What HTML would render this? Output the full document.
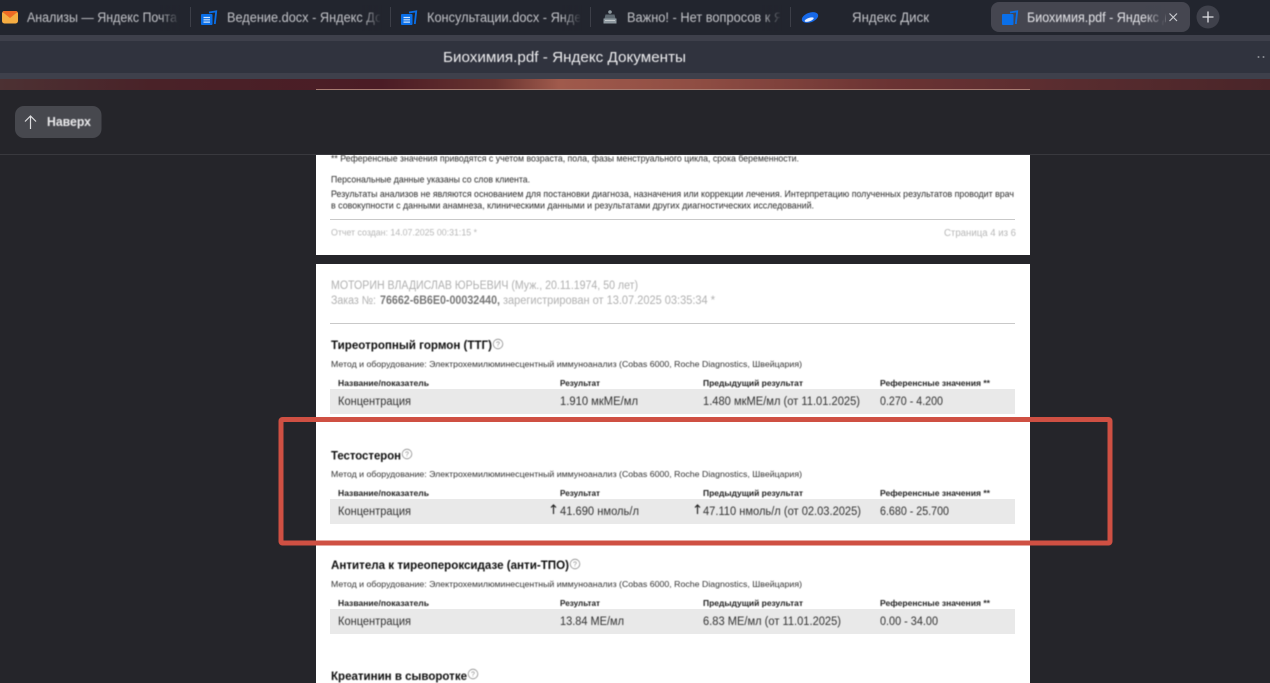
<!DOCTYPE html>
<html lang="ru"><head><meta charset="utf-8"><title>Биохимия.pdf - Яндекс Документы</title>
<style>
html,body{margin:0;padding:0;background:#25252a;overflow:hidden}
svg{display:block;font-family:"Liberation Sans",sans-serif}
.b{font-weight:bold}
</style></head><body>
<svg width="1270" height="683" viewBox="0 0 1270 683" xmlns="http://www.w3.org/2000/svg">
<defs>
<linearGradient id="strip" x1="0" x2="1" y1="0" y2="0">
<stop offset="0" stop-color="#4c3133"/><stop offset=".12" stop-color="#4a2228"/><stop offset=".3" stop-color="#4b1c25"/><stop offset=".39" stop-color="#683330"/><stop offset=".44" stop-color="#a05a4c"/><stop offset=".55" stop-color="#8f4d43"/><stop offset=".7" stop-color="#6b3333"/><stop offset=".85" stop-color="#582c2f"/><stop offset="1" stop-color="#4a2529"/>
</linearGradient>
<linearGradient id="f1" x1="0" x2="1" y1="0" y2="0"><stop offset="0" stop-color="#22252e" stop-opacity="0"/><stop offset="1" stop-color="#22252e"/></linearGradient>
<linearGradient id="f2" x1="0" x2="1" y1="0" y2="0"><stop offset="0" stop-color="#454650" stop-opacity="0"/><stop offset="1" stop-color="#454650"/></linearGradient>
<clipPath id="c1"><rect x="20" y="0" width="160" height="35"/></clipPath>
<clipPath id="c2"><rect x="220" y="0" width="160" height="35"/></clipPath>
<clipPath id="c3"><rect x="420" y="0" width="160" height="35"/></clipPath>
<clipPath id="c4"><rect x="620" y="0" width="160" height="35"/></clipPath>
<clipPath id="c5"><rect x="1020" y="0" width="145" height="35"/></clipPath>
<filter id="soft" x="-2%" y="-2%" width="104%" height="104%"><feGaussianBlur stdDeviation="0.4"/></filter>
<g id="doc">
<path d="M8 2 L15.200 .8 L13.800 13.500" fill="none" stroke="#0a6fe8" stroke-width="1.800"/>
<rect x="0" y="3.500" width="11.500" height="11" rx="1" fill="#0a6fe8"/>
</g>
<g id="docl">
<use href="#doc"/>
<path d="M2.500 7h6.500M2.500 9.300h6.500M2.500 11.600h6.500" stroke="#cfe3fb" stroke-width="1.200"/>
</g>
<g id="help"><circle cx="0" cy="0" r="4.800" fill="none" stroke="#8c8c8c" stroke-width=".8"/><text x="0" y="2.500" font-size="7" fill="#8c8c8c" text-anchor="middle">?</text></g>
</defs>

<rect width="1270" height="683" fill="#25252a"/>
<rect width="1270" height="35" fill="#22252e"/>
<rect y="35" width="1270" height="6" fill="#3e404b"/>
<rect y="41" width="1270" height="32" fill="#30333e"/>
<rect y="73" width="1270" height="6" fill="#3e404b"/>
<rect y="79" width="1270" height="11" fill="url(#strip)"/>
<rect x="316" y="89" width="714" height="1" fill="#a87c72"/>
<rect y="154" width="1270" height="1" fill="#39393e"/>

<!-- tabs -->
<rect x="991" y="2" width="199" height="30" rx="8" fill="#454650"/>
<circle cx="1208" cy="17" r="11.500" fill="#3f414b"/>
<path d="M1202.500 17h11M1208 11.500v11" stroke="#e2e2e6" stroke-width="1.300"/>
<path d="M1169.500 13.500l7.500 7.500M1177 13.500l-7.500 7.500" stroke="#c8c9ce" stroke-width="1.200"/>
<g fill="#3d3f48"><rect x="190" y="7" width="1" height="20"/><rect x="390" y="7" width="1" height="20"/><rect x="590" y="7" width="1" height="20"/><rect x="790" y="7" width="1" height="20"/></g>

<!-- tab icons -->
<rect x="2" y="11" width="16" height="12.500" rx="2.500" fill="#f6ad42"/>
<path d="M2.500 12 L10 18 L17.500 12 Q17 11 15.500 11 H4.500 Q3 11 2.500 12Z" fill="#ef6a24"/>
<use href="#docl" x="201" y="10.500"/>
<use href="#docl" x="401" y="10.500"/>
<use href="#doc" x="1002" y="10.500"/>
<g fill="#8e99a0"><path d="M603.500 18.500h13v5h-13z"/><path d="M605.500 14.500h9l1 4h-11z" fill="#5f6a72"/><circle cx="610" cy="12" r="1.800"/><path d="M605 20.500h10" stroke="#d4d8da" stroke-width=".8"/></g>
<g transform="rotate(-20 810 17.500)"><ellipse cx="810" cy="17.500" rx="8.500" ry="4.800" fill="#1769e8"/><ellipse cx="808.500" cy="19.200" rx="4.800" ry="1.700" fill="#e8f0ff"/></g>

<g font-size="13.500" fill="#c3c4c9" filter="url(#soft)">
<g clip-path="url(#c1)"><text x="27" y="22" textLength="150" lengthAdjust="spacingAndGlyphs">Анализы — Яндекс Почта</text></g>
<g clip-path="url(#c2)"><text x="227" y="22" textLength="205" lengthAdjust="spacingAndGlyphs">Ведение.docx - Яндекс Документы</text></g>
<g clip-path="url(#c3)"><text x="427" y="22" textLength="236" lengthAdjust="spacingAndGlyphs">Консультации.docx - Яндекс Документы</text></g>
<g clip-path="url(#c4)"><text x="627" y="22" textLength="190" lengthAdjust="spacingAndGlyphs">Важно! - Нет вопросов к Яндекс</text></g>
<text x="852" y="22" textLength="77" lengthAdjust="spacingAndGlyphs">Яндекс Диск</text>
<g clip-path="url(#c5)"><text x="1027" y="22" fill="#e6e6ea" textLength="200" lengthAdjust="spacingAndGlyphs">Биохимия.pdf - Яндекс Документы</text></g>
<text x="443" y="62" font-size="15" fill="#eeeef0" textLength="243" lengthAdjust="spacingAndGlyphs">Биохимия.pdf - Яндекс Документы</text>
</g>
<rect x="160" y="5" width="20" height="26" fill="url(#f1)"/>
<rect x="362" y="5" width="20" height="26" fill="url(#f1)"/>
<rect x="562" y="5" width="20" height="26" fill="url(#f1)"/>
<rect x="762" y="5" width="20" height="26" fill="url(#f1)"/>
<rect x="1145" y="5" width="20" height="26" fill="url(#f2)"/>
<circle cx="1258.500" cy="57" r="1" fill="#8b8d94"/><circle cx="1263.500" cy="57" r="1" fill="#8b8d94"/>

<!-- Button -->
<rect x="15" y="106" width="86.500" height="32" rx="9" fill="#47484e"/>
<path d="M30.500 129V116M25 121.500l5.500-5.500 5.500 5.500" fill="none" stroke="#dcdcde" stroke-width="1.200"/>
<text x="47" y="126" font-size="13" font-weight="bold" fill="#e9e9eb" textLength="44" lengthAdjust="spacingAndGlyphs" filter="url(#soft)">Наверх</text>

<!-- pages -->
<rect x="316" y="155" width="714" height="100" fill="#fff"/>
<rect x="316" y="264" width="714" height="419" fill="#fff"/>
<rect x="330" y="219" width="685" height="1" fill="#c9c9c9"/>
<rect x="330" y="323" width="685" height="1" fill="#c9c9c9"/>
<rect x="330" y="389" width="685" height="25" fill="#e9e9e9"/>
<rect x="330" y="499" width="685" height="25" fill="#e9e9e9"/>
<rect x="330" y="609" width="685" height="25" fill="#e9e9e9"/>

<g filter="url(#soft)">
<g font-size="8.800" fill="#2c2c2c">
<text x="331" y="161.500" textLength="468" lengthAdjust="spacingAndGlyphs">** Референсные значения приводятся с учетом возраста, пола, фазы менструального цикла, срока беременности.</text>
<text x="331" y="182.500" textLength="199" lengthAdjust="spacingAndGlyphs">Персональные данные указаны со слов клиента.</text>
<text x="331" y="197" textLength="683" lengthAdjust="spacingAndGlyphs">Результаты анализов не являются основанием для постановки диагноза, назначения или коррекции лечения. Интерпретацию полученных результатов проводит врач</text>
<text x="331" y="208.500" textLength="483" lengthAdjust="spacingAndGlyphs">в совокупности с данными анамнеза, клиническими данными и результатами других диагностических исследований.</text>
</g>
<g font-size="9" fill="#b7b7b7">
<text x="331" y="235.500" textLength="146" lengthAdjust="spacingAndGlyphs">Отчет создан: 14.07.2025 00:31:15 *</text>
<text x="944" y="236" font-size="9.800" textLength="72" lengthAdjust="spacingAndGlyphs">Страница 4 из 6</text>
</g>
<g font-size="11.500" fill="#b0b0b0">
<text x="331" y="289" textLength="307" lengthAdjust="spacingAndGlyphs">МОТОРИН ВЛАДИСЛАВ ЮРЬЕВИЧ (Муж., 20.11.1974, 50 лет)</text>
<text x="331" y="304" textLength="45" lengthAdjust="spacingAndGlyphs">Заказ №:</text>
<text x="380" y="304" class="b" fill="#777" textLength="120" lengthAdjust="spacingAndGlyphs">76662-6B6E0-00032440,</text>
<text x="503" y="304" textLength="212" lengthAdjust="spacingAndGlyphs">зарегистрирован от 13.07.2025 03:35:34 *</text>
</g>

<!-- Titles -->
<g font-size="12" class="b" fill="#111">
<text x="331" y="349" textLength="161" lengthAdjust="spacingAndGlyphs">Тиреотропный гормон (ТТГ)</text>
<text x="331" y="459.500" textLength="70" lengthAdjust="spacingAndGlyphs">Тестостерон</text>
<text x="331" y="569" textLength="238" lengthAdjust="spacingAndGlyphs">Антитела к тиреопероксидазе (анти-ТПО)</text>
<text x="331" y="680" textLength="136" lengthAdjust="spacingAndGlyphs">Креатинин в сыворотке</text>
</g>
<use href="#help" x="498" y="344"/><use href="#help" x="407" y="454"/><use href="#help" x="575" y="564"/><use href="#help" x="473" y="674"/>

<!-- Method -->
<g font-size="8.600" fill="#333">
<text x="331" y="367" textLength="471" lengthAdjust="spacingAndGlyphs">Метод и оборудование: Электрохемилюминесцентный иммуноанализ (Cobas 6000, Roche Diagnostics, Швейцария)</text>
<text x="331" y="477" textLength="471" lengthAdjust="spacingAndGlyphs">Метод и оборудование: Электрохемилюминесцентный иммуноанализ (Cobas 6000, Roche Diagnostics, Швейцария)</text>
<text x="331" y="587" textLength="471" lengthAdjust="spacingAndGlyphs">Метод и оборудование: Электрохемилюминесцентный иммуноанализ (Cobas 6000, Roche Diagnostics, Швейцария)</text>
</g>

<!-- Headers -->
<g font-size="8.600" class="b" fill="#222">
<text x="338" y="386" textLength="91" lengthAdjust="spacingAndGlyphs">Название/показатель</text><text x="560" y="386" textLength="40" lengthAdjust="spacingAndGlyphs">Результат</text><text x="703" y="386" textLength="100" lengthAdjust="spacingAndGlyphs">Предыдущий результат</text><text x="880" y="386" textLength="110" lengthAdjust="spacingAndGlyphs">Референсные значения **</text>
<text x="338" y="496" textLength="91" lengthAdjust="spacingAndGlyphs">Название/показатель</text><text x="560" y="496" textLength="40" lengthAdjust="spacingAndGlyphs">Результат</text><text x="703" y="496" textLength="100" lengthAdjust="spacingAndGlyphs">Предыдущий результат</text><text x="880" y="496" textLength="110" lengthAdjust="spacingAndGlyphs">Референсные значения **</text>
<text x="338" y="606" textLength="91" lengthAdjust="spacingAndGlyphs">Название/показатель</text><text x="560" y="606" textLength="40" lengthAdjust="spacingAndGlyphs">Результат</text><text x="703" y="606" textLength="100" lengthAdjust="spacingAndGlyphs">Предыдущий результат</text><text x="880" y="606" textLength="110" lengthAdjust="spacingAndGlyphs">Референсные значения **</text>
</g>

<!-- Rows -->
<g font-size="11.500" fill="#333">
<text x="338" y="405" textLength="73" lengthAdjust="spacingAndGlyphs">Концентрация</text><text x="560" y="405" textLength="78" lengthAdjust="spacingAndGlyphs">1.910 мкМЕ/мл</text><text x="703" y="405" textLength="157" lengthAdjust="spacingAndGlyphs">1.480 мкМЕ/мл (от 11.01.2025)</text><text x="880" y="405" textLength="63" lengthAdjust="spacingAndGlyphs">0.270 - 4.200</text>
<text x="338" y="515" textLength="73" lengthAdjust="spacingAndGlyphs">Концентрация</text><text x="560" y="515" textLength="79" lengthAdjust="spacingAndGlyphs">41.690 нмоль/л</text><text x="703" y="515" textLength="158" lengthAdjust="spacingAndGlyphs">47.110 нмоль/л (от 02.03.2025)</text><text x="880" y="515" textLength="69" lengthAdjust="spacingAndGlyphs">6.680 - 25.700</text>
<text x="338" y="625" textLength="73" lengthAdjust="spacingAndGlyphs">Концентрация</text><text x="560" y="625" textLength="64" lengthAdjust="spacingAndGlyphs">13.84 МЕ/мл</text><text x="703" y="625" textLength="138" lengthAdjust="spacingAndGlyphs">6.83 МЕ/мл (от 11.01.2025)</text><text x="880" y="625" textLength="58" lengthAdjust="spacingAndGlyphs">0.00 - 34.00</text>
</g>
<path d="M553.500 514V505M551 507.500l2.500-2.500 2.500 2.500M697.500 514V505M695 507.500l2.500-2.500 2.500 2.500" fill="none" stroke="#222" stroke-width="1.200"/>
</g>

<!-- red frame -->
<rect x="281" y="419.500" width="829" height="123.500" rx="1.500" fill="none" stroke="#cf5043" stroke-width="5"/>
</svg>
</body></html>
